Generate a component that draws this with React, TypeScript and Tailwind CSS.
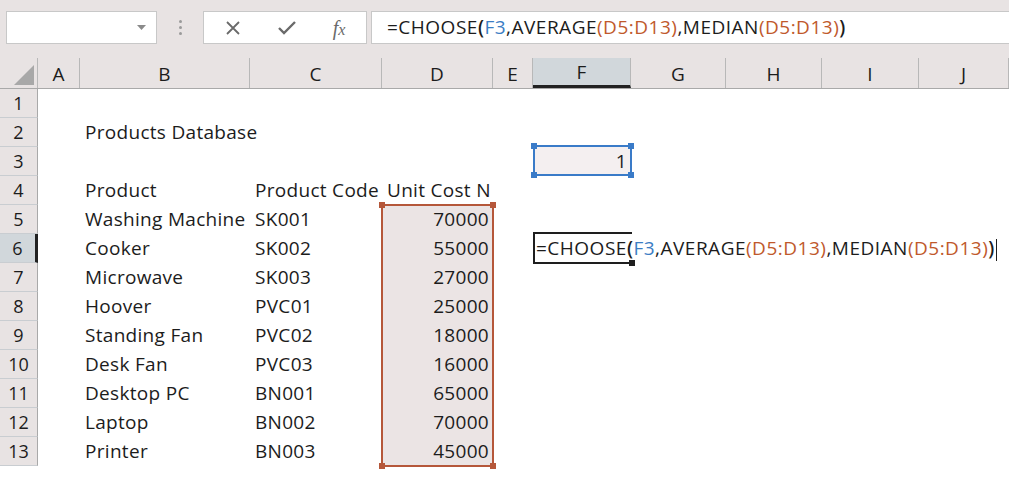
import React from "react";

const COLS = [
  { k: "A", w: 42 },
  { k: "B", w: 170 },
  { k: "C", w: 132 },
  { k: "D", w: 111 },
  { k: "E", w: 40 },
  { k: "F", w: 98 },
  { k: "G", w: 95 },
  { k: "H", w: 96 },
  { k: "I", w: 97 },
  { k: "J", w: 90 },
];

const gridCols = "grid grid-cols-[38px_42px_170px_132px_111px_40px_98px_95px_96px_97px_90px]";

type Cell = { t: string; right?: boolean };
const data: Record<number, Record<string, Cell>> = {
  2: { B: { t: "Products Database" } },
  3: { F: { t: "1", right: true } },
  4: { B: { t: "Product" }, C: { t: "Product Code" }, D: { t: "Unit Cost N" } },
  5: { B: { t: "Washing Machine" }, C: { t: "SK001" }, D: { t: "70000", right: true } },
  6: { B: { t: "Cooker" }, C: { t: "SK002" }, D: { t: "55000", right: true } },
  7: { B: { t: "Microwave" }, C: { t: "SK003" }, D: { t: "27000", right: true } },
  8: { B: { t: "Hoover" }, C: { t: "PVC01" }, D: { t: "25000", right: true } },
  9: { B: { t: "Standing Fan" }, C: { t: "PVC02" }, D: { t: "18000", right: true } },
  10: { B: { t: "Desk Fan" }, C: { t: "PVC03" }, D: { t: "16000", right: true } },
  11: { B: { t: "Desktop PC" }, C: { t: "BN001" }, D: { t: "65000", right: true } },
  12: { B: { t: "Laptop" }, C: { t: "BN002" }, D: { t: "70000", right: true } },
  13: { B: { t: "Printer" }, C: { t: "BN003" }, D: { t: "45000", right: true } },
};

function Formula() {
  return (
    <span className="whitespace-nowrap tracking-[0.5px]">
      <span>=CHOOSE</span>
      <span className="font-semibold">(</span>
      <span className="text-[#3b7dc4]">F3</span>
      <span>,AVERAGE</span>
      <span className="text-[#c0592c]">(D5:D13)</span>
      <span>,MEDIAN</span>
      <span className="text-[#c0592c]">(D5:D13)</span>
      <span className="font-semibold">)</span>
    </span>
  );
}

function Corner({ cls }: { cls: string }) {
  return <div className={`absolute w-[6px] h-[6px] ${cls}`} />;
}

export default function App() {
  const rows = Array.from({ length: 13 }, (_, i) => i + 1);
  return (
    <div className="w-[1009px] h-[477px] overflow-hidden bg-white font-['Open_Sans',sans-serif] text-[#1c1c1c] relative">
      {/* Formula bar */}
      <div className="h-[58px] bg-[#e8e3e3] flex items-start pt-[11px] pl-[6px]">
        <div className="w-[151px] h-[33px] bg-white border border-[#c8c8c8] flex items-center justify-end pr-[10px]">
          <svg width="9" height="5" viewBox="0 0 9 5">
            <polygon points="0,0 9,0 4.5,5" fill="#8a8a8a" />
          </svg>
        </div>
        <div className="w-[46px] h-[33px] flex flex-col items-center justify-center gap-[3px]">
          <div className="w-[3px] h-[3px] rounded-full bg-[#9a9a9a]" />
          <div className="w-[3px] h-[3px] rounded-full bg-[#9a9a9a]" />
          <div className="w-[3px] h-[3px] rounded-full bg-[#9a9a9a]" />
        </div>
        <div className="w-[164px] h-[33px] bg-white border border-[#c8c8c8] flex items-center">
          <div className="w-[58px] flex justify-center">
            <svg width="16" height="16" viewBox="0 0 16 16">
              <path d="M2 2 L14 14 M14 2 L2 14" stroke="#6a6a6a" strokeWidth="1.8" fill="none" />
            </svg>
          </div>
          <div className="w-[50px] flex justify-center">
            <svg width="18" height="14" viewBox="0 0 18 14">
              <path d="M1 7 L6 12 L17 1" stroke="#6a6a6a" strokeWidth="2.4" fill="none" />
            </svg>
          </div>
          <div className="w-[54px] flex justify-center">
            <span className="font-['Liberation_Serif',serif] italic text-[20px] text-[#6a6a6a] leading-none">
              f<span className="text-[16px]">x</span>
            </span>
          </div>
        </div>
        <div className="flex-1 ml-[4px] h-[33px] bg-white border border-[#c8c8c8] border-r-0 flex items-center pl-[15px] text-[19px] leading-none">
          <Formula />
        </div>
      </div>

      {/* Column headers */}
      <div className={`${gridCols} h-[31px] bg-[#e8e3e3] border-b border-[#a9a9a9]`}>
        <div className="border-r border-[#b8b8b8] flex items-end justify-end pr-[3px] pb-[3px]">
          <svg width="20" height="20" viewBox="0 0 20 20">
            <polygon points="20,0 20,20 0,20" fill="#a8a8a8" />
          </svg>
        </div>
        {COLS.map((c) => (
          <div
            key={c.k}
            className={`flex items-center justify-center text-[19px] leading-none pt-[2px] border-r border-[#b8b8b8] ${
              c.k === "F" ? "bg-[#d1d7db] border-b-[3px] border-b-[#222]" : ""
            }`}
          >
            {c.k}
          </div>
        ))}
      </div>

      {/* Rows */}
      <div className="relative">
        {rows.map((r) => (
          <div key={r} className={`${gridCols} h-[29px]`}>
            <div
              className={`flex items-center justify-center text-[18px] leading-none border-b border-[#c9cdd1] ${
                r === 6
                  ? "bg-[#d1d7db] border-r-[3px] border-r-[#222]"
                  : "bg-[#e8e3e3] border-r border-r-[#a9a9a9]"
              }`}
            >
              {r}
            </div>
            {COLS.map((c) => {
              const cell = data[r]?.[c.k];
              const inRange = c.k === "D" && r >= 5 && r <= 13;
              if (r === 6 && c.k === "F") {
                return (
                  <div key={c.k} className="relative flex items-end pb-[5px] pl-[3px] text-[19px] leading-none overflow-visible z-10">
                    <Formula />
                    <span className="inline-block w-[1px] h-[22px] bg-[#1e1e1e] ml-[1px] -mb-[3px] shrink-0" />
                  </div>
                );
              }
              return (
                <div
                  key={c.k}
                  className={`flex items-end pb-[5px] text-[19px] tracking-[0.3px] leading-none whitespace-nowrap ${
                    cell?.right ? "justify-end pr-[4px]" : "pl-[5px]"
                  } ${inRange ? "bg-[#ebe4e4]" : ""} ${r === 3 && c.k === "F" ? "bg-[#f4eff0]" : ""}`}
                >
                  {cell?.t ?? ""}
                </div>
              );
            })}
          </div>
        ))}

        {/* D5:D13 range highlight */}
        <div className="absolute left-[381px] top-[115px] w-[113px] h-[263px] border-2 border-[#b5573a] pointer-events-none">
          <Corner cls="-left-[4px] -top-[4px] bg-[#b5573a]" />
          <Corner cls="-right-[4px] -top-[4px] bg-[#b5573a]" />
          <Corner cls="-left-[4px] -bottom-[4px] bg-[#b5573a]" />
          <Corner cls="-right-[4px] -bottom-[4px] bg-[#b5573a]" />
        </div>

        {/* F3 reference highlight */}
        <div className="absolute left-[533px] top-[56px] w-[99px] h-[31px] border-2 border-[#3a7bc8] pointer-events-none">
          <Corner cls="-left-[4px] -top-[4px] bg-[#3a7bc8]" />
          <Corner cls="-right-[4px] -top-[4px] bg-[#3a7bc8]" />
          <Corner cls="-left-[4px] -bottom-[4px] bg-[#3a7bc8]" />
          <Corner cls="-right-[4px] -bottom-[4px] bg-[#3a7bc8]" />
        </div>

        {/* Active cell F6 */}
        <div className="absolute left-[533px] top-[143px] w-[99px] h-[32px] border-2 border-r-0 border-[#1e1e1e] pointer-events-none">
          <div className="absolute -right-[3px] -bottom-[4px] w-[6px] h-[6px] bg-[#1e1e1e]" />
        </div>
      </div>
    </div>
  );
}
